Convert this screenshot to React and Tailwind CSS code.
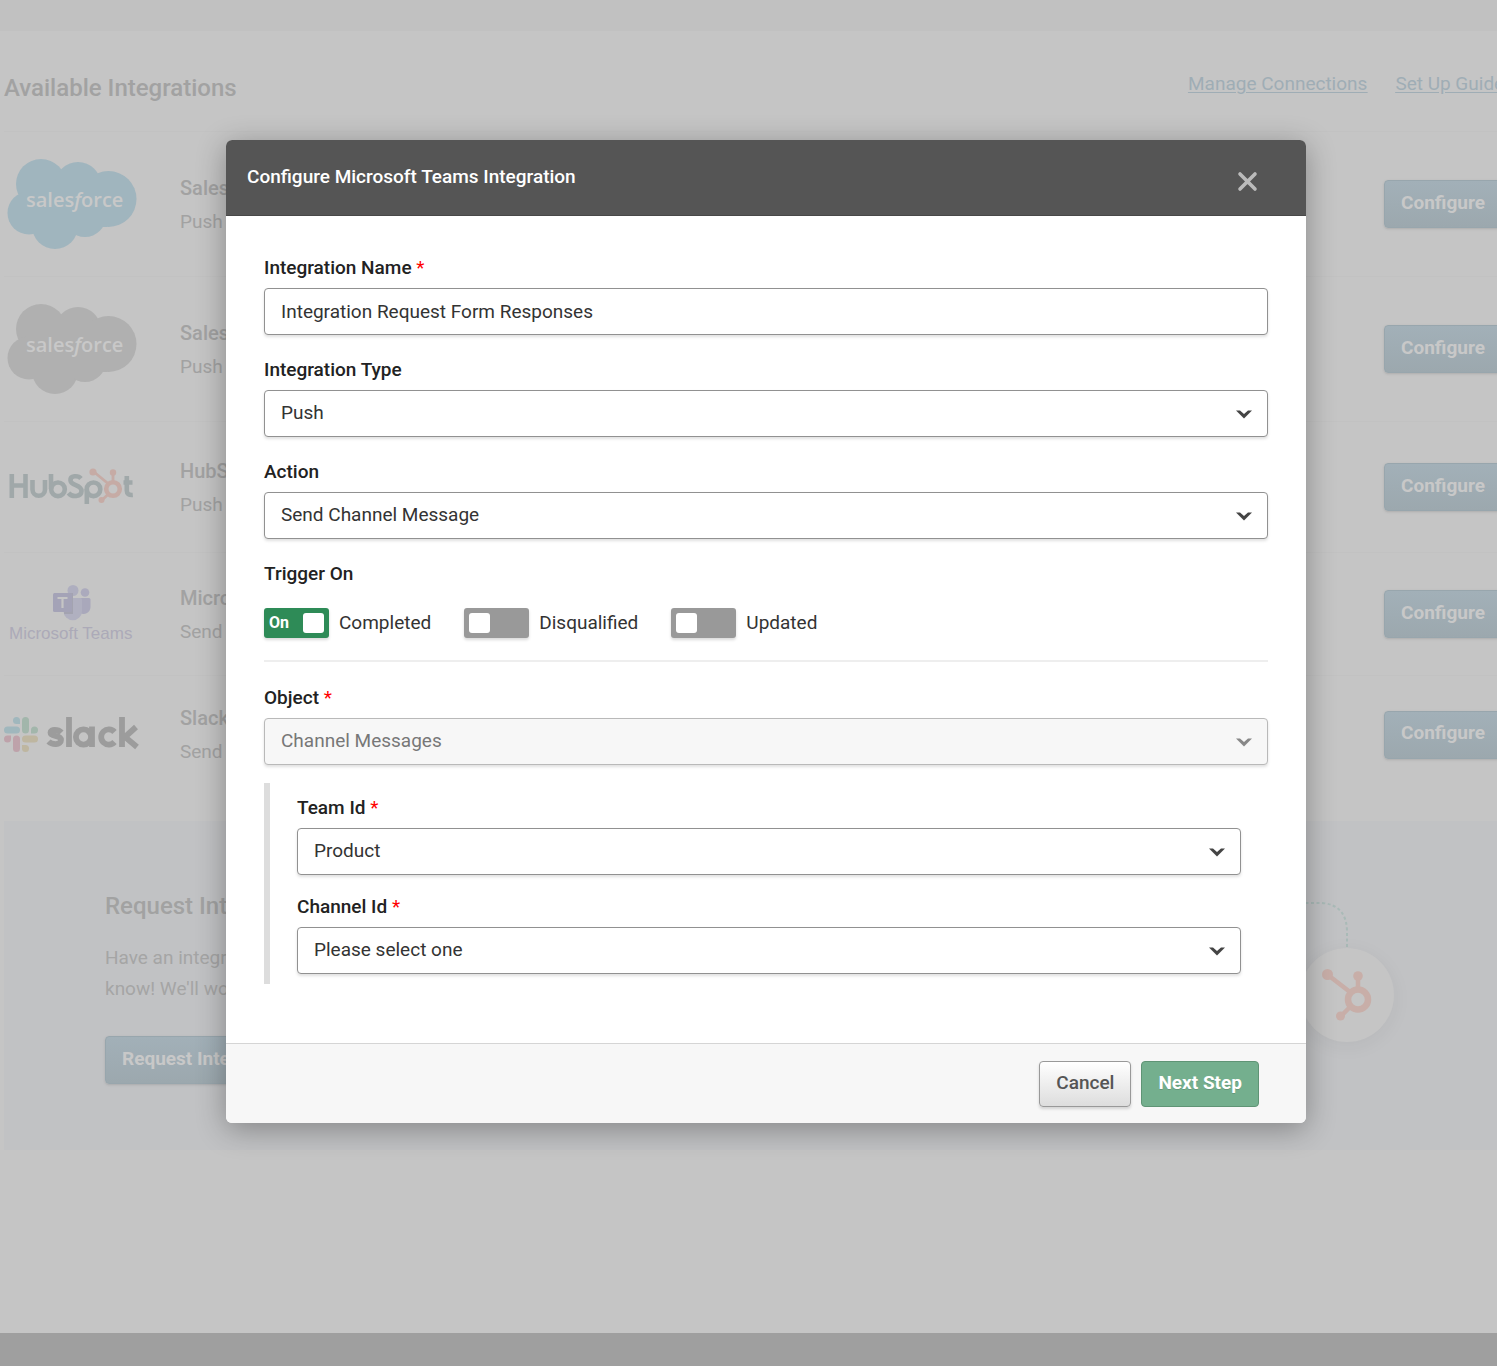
import React from "react";

const chevronPath = "M0 0.500 H4 L8 4 L12 0.500 H16 L8 8.500 Z";

function Cloud({ color }) {
  return (
    <svg viewBox="0 0 130 90" className="h-[90px] w-[130px]" role="img" aria-label="salesforce">
      <g fill={color}>
        <circle cx="34" cy="25" r="25" />
        <circle cx="71" cy="26" r="23" />
        <circle cx="101.500" cy="40" r="28" />
        <circle cx="22" cy="54" r="21.500" />
        <circle cx="48" cy="67" r="23" />
        <circle cx="78" cy="57" r="21" />
        <rect x="20" y="22" width="80" height="46" />
      </g>
      <text x="19" y="48" fill="#c8c8c8" fontFamily="'Open Sans', sans-serif" fontWeight="600" fontSize="20">
        sales<tspan fontStyle="italic">f</tspan>orce
      </text>
    </svg>
  );
}

function Sprocket({ className }) {
  return (
    <svg viewBox="0 0 50 52" className={className} aria-hidden="true" fill="none" stroke="#c8aea8">
      <circle cx="36" cy="30.500" r="10" strokeWidth="6.500" />
      <path d="M6 6 L28 23 M36 6 V20 M29 37 L18 48" strokeWidth="4.500" />
      <g fill="#c8aea8" stroke="none">
        <circle cx="5.500" cy="5.500" r="5.500" />
        <circle cx="36" cy="7" r="4.800" />
        <circle cx="18.500" cy="47" r="4.500" />
      </g>
    </svg>
  );
}

function HubSpotLogo() {
  return (
    <svg viewBox="0 0 128 40" className="h-[40px] w-[128px]" role="img" aria-label="HubSpot">
      <g fill="none" stroke="#a0a8a9" strokeWidth="4.600">
        <path d="M3.800 7 V31 M17.500 7 V31 M3.800 18.500 H17.500" />
        <path d="M24.500 13 V22.500 a6 6 0 0 0 12.500 0 V13" />
        <path d="M43 7 V22" />
        <circle cx="50" cy="22.300" r="6.800" />
        <path d="M73 11.500 C70 8 62 8.500 62.500 13.500 C63 19 73.500 17.500 73.500 24 C73.500 30 64 30.500 60.500 26" />
        <circle cx="85.500" cy="22.300" r="6.800" />
        <path d="M78.800 22 V37" />
        <path d="M118.800 9 V23.500 q0 5 6 4.500 M115.500 15.500 H124.500" />
      </g>
      <g fill="none" stroke="#c6aba5">
        <circle cx="105" cy="22" r="6.800" strokeWidth="4.600" />
        <path d="M86 5 L100 16.500 M105 6 V14 M100 27.500 L94 33" strokeWidth="2.800" />
      </g>
      <g fill="#c6aba5">
        <circle cx="85" cy="5" r="3.600" />
        <circle cx="105" cy="5.500" r="3.200" />
        <circle cx="93.500" cy="33" r="3" />
      </g>
    </svg>
  );
}

function TeamsLogo() {
  return (
    <svg viewBox="-1 2 130 60" className="h-[60px] w-[130px]" role="img" aria-label="Microsoft Teams">
      <circle cx="77" cy="10.500" r="4.300" fill="#abaabd" />
      <path d="M72 16 H81 Q82.500 16 82.500 17.500 V25 A7 7 0 0 1 72 31 Z" fill="#a9a8bb" />
      <circle cx="65" cy="8.500" r="5.500" fill="#aeaebf" />
      <path d="M56 16 H72.500 Q74 16 74 17.500 V29 A9.200 9.200 0 0 1 55.500 29 Z" fill="#b0b0c0" />
      <path d="M56 11 H65 V32 H56 Z" fill="#a3a3b0" />
      <rect x="45" y="11" width="19" height="19" rx="1.500" fill="#a4a3b7" />
      <path d="M49.500 16 H59.500 M54.500 16 V26" stroke="#c5c5c5" strokeWidth="2.200" />
      <text x="1" y="57" fill="#acaab8" fontFamily="'Liberation Sans', sans-serif" fontSize="17">
        Microsoft Teams
      </text>
    </svg>
  );
}

function SlackLogo() {
  return (
    <svg viewBox="0 0 136 36" className="h-[36px] w-[136px]" role="img" aria-label="slack">
      <g fill="#a0b7bd">
        <rect x="0" y="9.500" width="16" height="7" rx="3.500" />
        <path d="M16 7 h-3.500 a3.500 3.500 0 1 1 3.500 -3.500 Z" />
      </g>
      <g fill="#a2b6ab">
        <rect x="18" y="0" width="7" height="16.500" rx="3.500" />
        <path d="M27 16.500 v-3.500 a3.500 3.500 0 1 1 3.500 3.500 Z" />
      </g>
      <g fill="#bea2aa">
        <rect x="9" y="18.500" width="7" height="16.500" rx="3.500" />
        <path d="M7 18.500 v3.500 a3.500 3.500 0 1 1 -3.500 -3.500 Z" />
      </g>
      <g fill="#beb6a0">
        <rect x="18" y="18.500" width="16" height="7" rx="3.500" />
        <path d="M18 28 h3.500 a3.500 3.500 0 1 1 -3.500 3.500 Z" />
      </g>
      <g fill="none" stroke="#9c9c9c" strokeWidth="5.800">
        <path d="M57.500 15.500 C54 12 46.500 12 46.500 15.500 C46.500 20.500 57 17 57 23 C57 28.500 48 28 44.500 24.500" />
        <path d="M65 0 V30" />
        <circle cx="79.500" cy="20" r="7.600" />
        <path d="M88 9.500 V30" />
        <path d="M110.500 15 A7.600 7.600 0 1 0 110.500 25" />
        <path d="M118 0 V30 M132 10 L121 20 L133 30" />
      </g>
    </svg>
  );
}

function BlueButton({ children }) {
  return (
    <button
      type="button"
      className="h-12 shrink-0 rounded border border-[#98a6ad] bg-linear-to-b from-[#a2b0b8] to-[#9ca8ae] px-4 pb-0.5 text-[19px] font-bold whitespace-nowrap text-[#c8c8c8] shadow-sm"
    >
      {children}
    </button>
  );
}

const integrations = [
  { title: "Salesforce", text: "Push data", logo: <Cloud color="#a0b5be" />, height: "h-[145px]" },
  { title: "Salesforce", text: "Push data", logo: <Cloud color="#b0b0b0" />, height: "h-[145px]" },
  { title: "HubSpot", text: "Push data", logo: <HubSpotLogo />, height: "h-[131px]" },
  { title: "Microsoft", text: "Send data", logo: <TeamsLogo />, height: "h-[123px]" },
  { title: "Slack", text: "Send data", logo: <SlackLogo />, height: "h-[117px]" },
];

function Background() {
  return (
    <div className="flex min-h-screen flex-col overflow-hidden bg-[#c5c5c5]">
      <div className="h-[31px] bg-[#c1c1c1]" />
      <main className="-mr-[5px] ml-1 flex-1">
        <header className="flex h-[101px] items-center justify-between border-b border-[#c2c2c2] pt-[14px]">
          <h1 className="text-2xl font-medium text-[#a2a2a2]">Available Integrations</h1>
          <nav className="-mr-3 flex gap-7 pb-[7px] text-[19px] text-[#9fadb5] underline underline-offset-2">
            <a href="#connections">Manage Connections</a>
            <a href="#guides">Set Up Guides</a>
          </nav>
        </header>
        <ul>
          {integrations.map((item, i) => (
            <li key={i} className={`flex items-center border-b border-[#c2c2c2] last:border-0 ${item.height}`}>
              <div className="flex w-[136px] shrink-0 justify-center">{item.logo}</div>
              <div className="ml-10 flex-1 pt-[3px] text-[#a2a2a2]">
                <h2 className="text-xl leading-8 font-medium">{item.title}</h2>
                <p className="text-[19px] leading-9">{item.text}</p>
              </div>
              <BlueButton>Configure</BlueButton>
            </li>
          ))}
        </ul>
        <section className="mt-7 flex h-[329px] justify-between bg-[#c1c2c4] pt-[65px] pr-[108px] pl-[101px]">
          <div>
            <h2 className="text-2xl leading-10 font-medium text-[#a2a2a2]">Request Integration</h2>
            <p className="mt-4 mb-8 w-[280px] text-[19px] leading-[31px] text-[#a5a5a5]">
              Have an integration idea? Let us know! We'll work on it.
            </p>
            <BlueButton>Request Integration</BlueButton>
          </div>
          <div className="flex flex-col items-center">
            <svg viewBox="0 0 94 46" className="mt-4 h-[46px] w-[94px]" aria-hidden="true">
              <path d="M0 1 H22 Q47 3 47 30 V46" fill="none" stroke="#a9bab7" strokeWidth="2" strokeDasharray="3 2.500" />
            </svg>
            <div className="flex size-[94px] items-center justify-center rounded-full bg-[#c5c5c5] shadow-[0_4px_20px_rgba(0,0,0,0.05)]">
              <Sprocket className="h-[52px] w-[50px]" />
            </div>
          </div>
        </section>
      </main>
      <footer className="h-[33px] bg-[#9f9f9f]" />
    </div>
  );
}

function Label({ htmlFor, required, children }) {
  return (
    <label htmlFor={htmlFor} className="block text-[19px] leading-6 font-medium text-[#222]">
      {children}
      {required && <span className="font-normal text-[#f00]"> *</span>}
    </label>
  );
}

const fieldClass =
  "block h-[47px] w-full appearance-none rounded border border-[#919191] bg-white px-4 text-[19px] text-[#333] shadow-[0_2px_3px_rgba(0,0,0,0.12)] disabled:border-[#b9b9b9] disabled:bg-[#f7f7f7] disabled:text-[#777] disabled:opacity-100";

function SelectField({ id, label, value, required, disabled }) {
  return (
    <div>
      <Label htmlFor={id} required={required}>{label}</Label>
      <div className="relative mt-2">
        <select id={id} disabled={disabled} defaultValue={value} className={fieldClass}>
          <option>{value}</option>
        </select>
        <svg
          viewBox="0 0 16 9"
          className={`pointer-events-none absolute top-5 right-4 h-[9px] w-[16px] ${disabled ? "text-[#888]" : "text-[#444]"}`}
          fill="currentColor"
          aria-hidden="true"
        >
          <path d={chevronPath} />
        </svg>
      </div>
    </div>
  );
}

function Toggle({ label, defaultChecked }) {
  return (
    <label className="flex items-center gap-[10px] text-[19px] text-[#333]">
      <input type="checkbox" role="switch" defaultChecked={defaultChecked} className="peer sr-only" />
      <span className="flex h-[30px] w-[65px] items-center rounded-[3px] bg-[#999] px-[5px] shadow-[0_2px_3px_rgba(0,0,0,0.15)] peer-checked:justify-between peer-checked:bg-[#2e8b57]">
        {defaultChecked && <span className="text-base font-bold text-white">On</span>}
        <span className="h-5 w-[21px] rounded-[3px] bg-white" />
      </span>
      {label}
    </label>
  );
}

function Modal() {
  return (
    <div className="absolute inset-x-0 top-[140px] flex justify-center pl-[35px]">
      <form
        role="dialog"
        aria-labelledby="dialog-title"
        className="w-full max-w-[1080px] overflow-hidden rounded-md bg-white shadow-[0_6px_30px_rgba(0,0,0,0.32)]"
        onSubmit={(e) => e.preventDefault()}
      >
        <header className="flex h-[76px] items-center justify-between border-b border-[#484848] bg-[#555] pr-12 pl-[21px]">
          <h2 id="dialog-title" className="text-[19px] font-medium text-white">
            Configure Microsoft Teams Integration
          </h2>
          <button type="button" aria-label="Close" className="mt-2 text-[#bbb]">
            <svg viewBox="0 0 22 22" className="size-[22px]" fill="none" stroke="currentColor" strokeWidth="3.600" strokeLinecap="round">
              <path d="M4 3 L19 18 M19 3 L4 18" />
            </svg>
          </button>
        </header>

        <div className="px-[38px] pt-10 pb-[59px]">
          <Label htmlFor="name" required>Integration Name</Label>
          <input id="name" type="text" defaultValue="Integration Request Form Responses" className={`${fieldClass} mt-2`} />
          <div className="mt-[23px] flex flex-col gap-[23px]">
            <SelectField id="type" label="Integration Type" value="Push" />
            <SelectField id="action" label="Action" value="Send Channel Message" />
          </div>
          <fieldset className="mt-[23px]">
            <legend className="text-[19px] leading-6 font-medium text-[#222]">Trigger On</legend>
            <div className="mt-[22px] flex gap-[33px]">
              <Toggle label="Completed" defaultChecked />
              <Toggle label="Disqualified" />
              <Toggle label="Updated" />
            </div>
          </fieldset>
          <hr className="mt-[22px] mb-6 border-t-2 border-[#eee]" />
          <SelectField id="object" label="Object" value="Channel Messages" required disabled />
          <div className="mt-[18px] flex flex-col gap-5 border-l-6 border-[#ddd] pt-[13px] pr-[27px] pb-[10px] pl-[27px]">
            <SelectField id="team" label="Team Id" value="Product" required />
            <SelectField id="channel" label="Channel Id" value="Please select one" required />
          </div>
        </div>

        <footer className="flex h-20 items-center justify-end gap-[10px] border-t border-[#d5d5d5] bg-[#f7f7f7] pr-[47px]">
          <button
            type="button"
            className="h-[46px] rounded border border-[#999] bg-linear-to-b from-white to-[#ddd] px-4 text-[19px] font-medium text-[#555] shadow-[0_2px_3px_rgba(0,0,0,0.15)]"
          >
            Cancel
          </button>
          <button
            type="submit"
            className="h-[46px] rounded border border-[#5f9475] bg-[#74af8e] px-4 text-[19px] font-bold text-white text-shadow-2xs"
          >
            Next Step
          </button>
        </footer>
      </form>
    </div>
  );
}

export default function App() {
  return (
    <div className="relative font-[Roboto,sans-serif]">
      <Background />
      <Modal />
    </div>
  );
}
